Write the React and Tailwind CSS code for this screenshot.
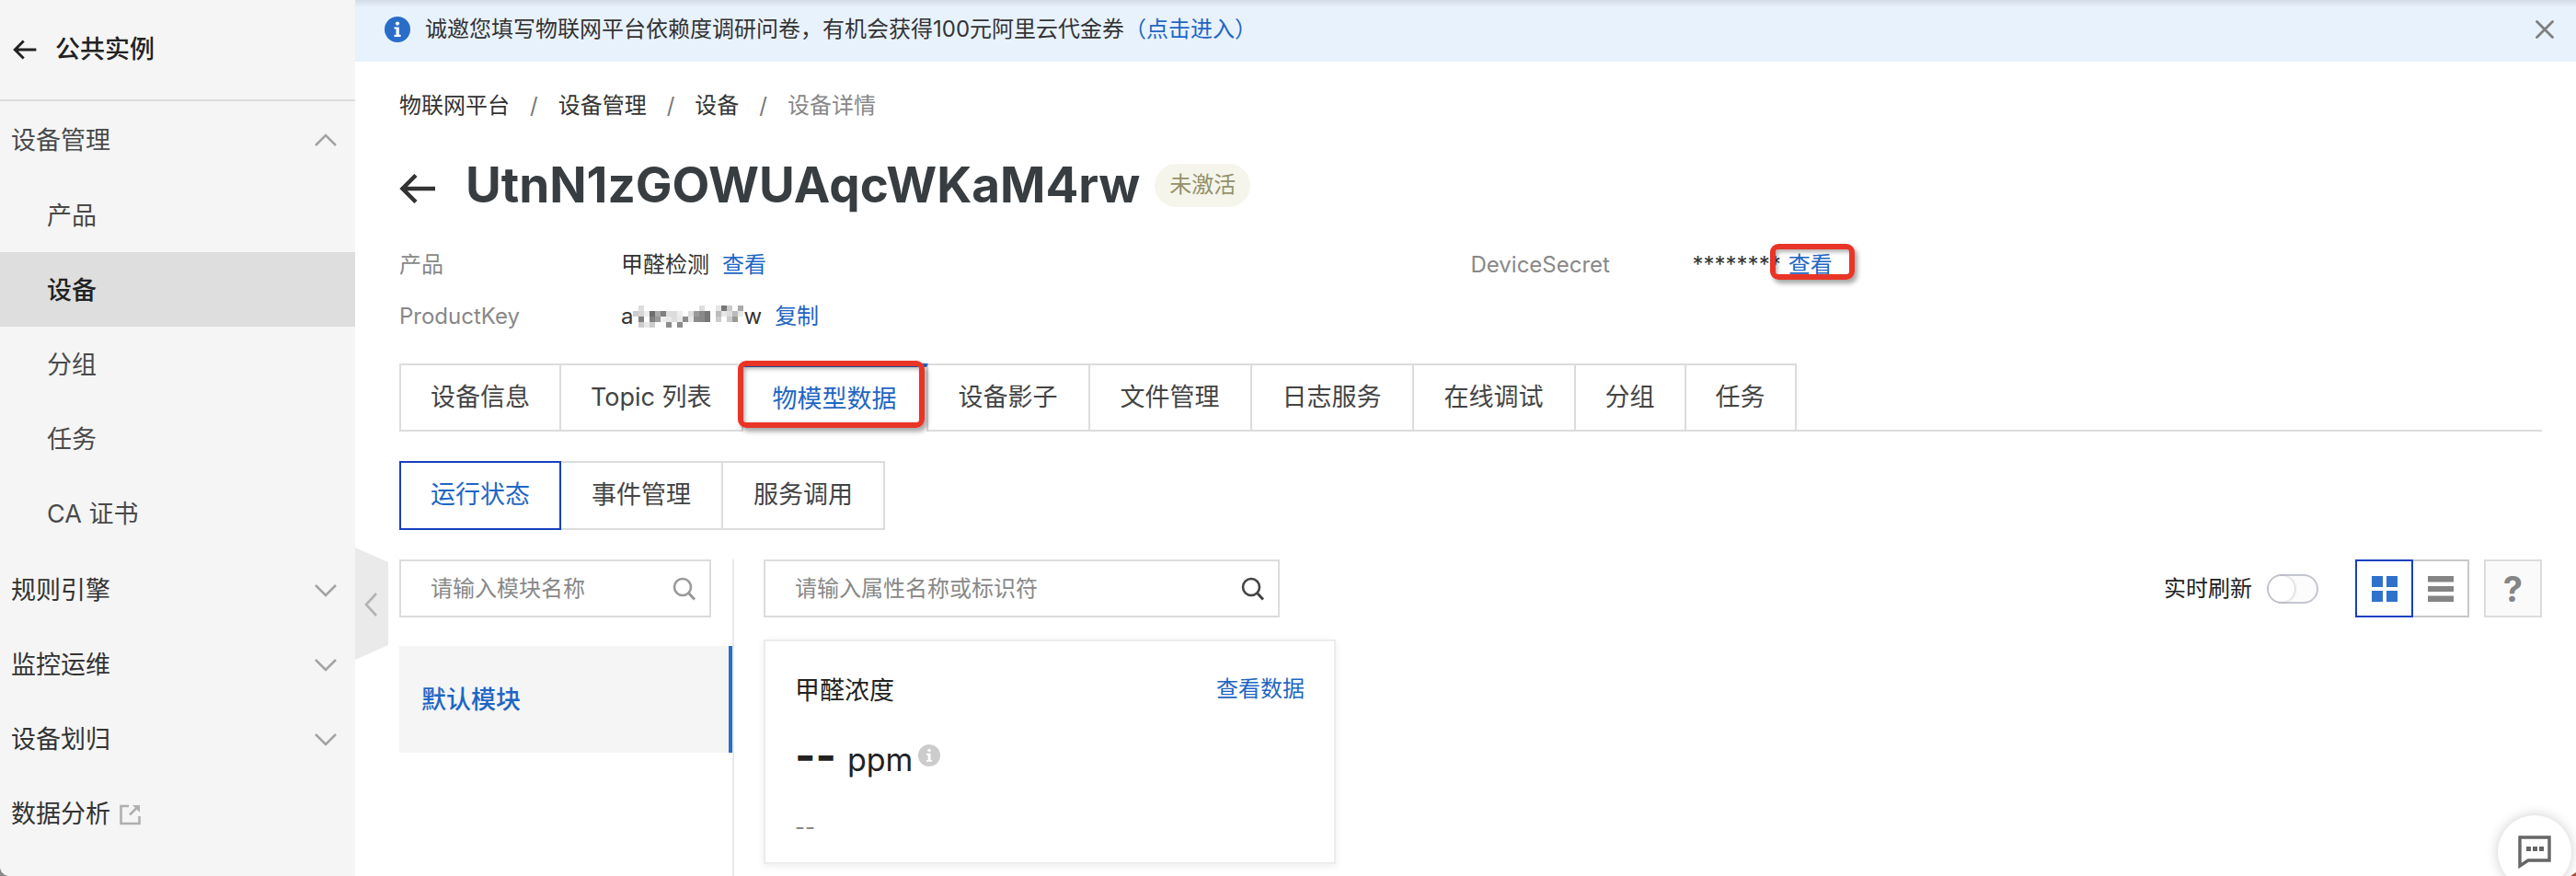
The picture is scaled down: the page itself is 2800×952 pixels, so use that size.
import { useState } from "react";

const fontStack = "font-['Inter','Noto_Sans_CJK_SC',sans-serif]";

function Chevron({ up }) {
  return (
    <svg width="24" height="14" viewBox="0 0 24 14" fill="none" stroke="#a3a3a3" strokeWidth="2.5" aria-hidden="true">
      <path d={up ? "M1 13L12 2L23 13" : "M1 1L12 12L23 1"} />
    </svg>
  );
}

function ArrowLeft({ className }) {
  return (
    <svg className={className} viewBox="0 0 40 32" fill="none" stroke="currentColor" strokeWidth="4.5" aria-hidden="true">
      <path d="M18 1.5L3.5 16L18 30.5M3.5 16H39" />
    </svg>
  );
}

function InfoIcon({ className }) {
  return (
    <svg className={className} viewBox="0 0 28 28" aria-hidden="true">
      <circle cx="14" cy="14" r="14" fill="currentColor" />
      <circle cx="14" cy="7.6" r="2.1" fill="#fff" />
      <path d="M10.5 11.5H15.8V19.8H17.6V22H10.5V19.8H12.5V13.6H10.5Z" fill="#fff" />
    </svg>
  );
}

function SearchIcon({ className }) {
  return (
    <svg className={className} viewBox="0 0 26 26" fill="none" stroke="currentColor" strokeWidth="2.6" aria-hidden="true">
      <circle cx="11" cy="11" r="9" />
      <path d="M17.5 17.5L24 24.5" strokeWidth="3" />
    </svg>
  );
}

const subItems = ["产品", "设备", "分组", "任务", "CA 证书"];
const groups = ["规则引擎", "监控运维", "设备划归"];

function Sidebar() {
  return (
    <aside className="relative w-[386px] shrink-0 bg-[#f5f5f5]">
      <div className="flex h-[110px] items-center gap-5 border-b-2 border-[#dcdcdc] pl-[14px] text-[27px] font-medium text-[#222]">
        <button type="button" aria-label="返回" className="flex">
          <ArrowLeft className="h-6 w-[26px]" />
        </button>
        公共实例
      </div>
      <nav className="text-[27px] text-[#4a4a4a]">
        <button type="button" className="flex h-[83px] w-full items-center justify-between pr-5 pl-3">
          <span className="pt-1">设备管理</span>
          <Chevron up />
        </button>
        <ul className="pb-[2px]">
          {subItems.map((item) => (
            <li key={item}>
              <a
                href="#"
                className={
                  item === "设备"
                    ? "flex h-[81px] items-center bg-[#dedede] pt-1 pl-[51px] font-medium text-[#222]"
                    : "flex h-[81px] items-center pt-1 pl-[51px]"
                }
              >
                {item}
              </a>
            </li>
          ))}
        </ul>
        {groups.map((item) => (
          <button key={item} type="button" className="flex h-[81px] w-full items-center justify-between pt-[2px] pr-5 pl-3 text-[#333]">
            <span className="pt-[2px]">{item}</span>
            <Chevron />
          </button>
        ))}
        <a href="#" className="flex h-[81px] items-center gap-[10px] pt-1 pl-3 text-[#333]">
          数据分析
          <svg width="23" height="23" viewBox="0 0 23 23" fill="none" stroke="#b0b0b0" strokeWidth="2.6" aria-hidden="true">
            <path d="M10 2H1.5V21H21.5V13M11 11.5L20 2.5" />
            <path d="M14 1H22V9Z" fill="#b0b0b0" stroke="none" />
          </svg>
        </a>
      </nav>
      <button type="button" aria-label="收起菜单" className="absolute top-[595px] left-full">
        <svg width="36" height="122" viewBox="0 0 36 122" fill="none" aria-hidden="true">
          <path d="M0 0L36 16V106L0 122Z" fill="#eaeaea" />
          <path d="M23 50L12 62L23 74" stroke="#b3b3b3" strokeWidth="2.6" />
        </svg>
      </button>
      <svg className="absolute bottom-0 left-0" width="9" height="9" viewBox="0 0 9 9" aria-hidden="true">
        <path d="M0 0C1 5 4 8 9 9H0Z" fill="#8a8a8a" />
      </svg>
    </aside>
  );
}

function Banner() {
  return (
    <div className="flex h-[67px] items-center bg-[#e8f2fd] bg-linear-to-b from-[#d3dce6] to-[#e8f2fd] to-[8px] pr-6 pb-1 pl-8 text-2xl text-[#333]">
      <InfoIcon className="mr-4 size-7 text-[#2a6dc9]" />
      <p>
        诚邀您填写物联网平台依赖度调研问卷，有机会获得100元阿里云代金券
        <a href="#" className="text-[#1f66c4]">（点击进入）</a>
      </p>
      <button type="button" aria-label="关闭" className="ml-auto">
        <svg width="20" height="20" viewBox="0 0 20 20" stroke="#7f7f7f" strokeWidth="2.8" strokeLinecap="round" aria-hidden="true">
          <path d="M1.5 1.5L18.5 18.5M18.5 1.5L1.5 18.5" />
        </svg>
      </button>
    </div>
  );
}

/* Column, row and grey of each 6px block that masks the key. */
const mosaicCells = [
  [0, 1, "#ccc"], [1, 0, "#ddd"], [1, 1, "#d5d5d5"], [1, 2, "#808080"], [1, 3, "#ccc"], [2, 1, "#eee"], [2, 3, "#e8e8e8"],
  [3, 1, "#6e6e6e"], [3, 2, "#808080"], [3, 3, "#ccc"], [4, 1, "#aaa"], [4, 2, "#999"], [5, 1, "#808080"], [5, 2, "#eee"],
  [6, 1, "#ddd"], [6, 2, "#e8e8e8"], [6, 3, "#8c8c8c"], [7, 1, "#ddd"], [7, 2, "#ddd"], [8, 1, "#eee"], [8, 2, "#e8e8e8"], [8, 3, "#8c8c8c"],
  [9, 2, "#8c8c8c"], [10, 1, "#ddd"], [10, 2, "#e8e8e8"], [11, 1, "#999"], [11, 2, "#8c8c8c"], [12, 0, "#ddd"], [12, 1, "#888"], [12, 2, "#888"],
  [13, 1, "#777"], [13, 2, "#777"], [15, 0, "#e5e5e5"], [15, 1, "#bbb"], [15, 2, "#ccc"], [16, 0, "#777"], [16, 1, "#e8e8e8"],
  [17, 0, "#ccc"], [17, 1, "#ddd"], [17, 2, "#ccc"], [18, 1, "#bbb"], [18, 2, "#999"], [19, 0, "#aaa"], [19, 1, "#e8e8e8"],
];

function Mosaic() {
  return (
    <svg width="120" height="24" viewBox="0 0 120 24" shapeRendering="crispEdges" aria-hidden="true">
      {mosaicCells.map(([x, y, c]) => (
        <rect key={x + "-" + y} x={x * 6} y={y * 6} width="6" height="6" fill={c} />
      ))}
    </svg>
  );
}

function Highlight({ className }) {
  return (
    <span
      aria-hidden="true"
      className={
        "pointer-events-none absolute rounded-[9px] border-[6px] border-[#e83527] shadow-[3px_4px_5px_rgba(0,0,0,0.35),inset_2px_3px_4px_rgba(0,0,0,0.3)] " +
        className
      }
    />
  );
}

const tabs = ["设备信息", "Topic 列表", "物模型数据", "设备影子", "文件管理", "日志服务", "在线调试", "分组", "任务"];
const subTabs = ["运行状态", "事件管理", "服务调用"];

function Header() {
  return (
    <>
      <nav aria-label="面包屑" className="mt-[30px] flex h-9 items-center gap-[22px] text-2xl text-[#333]">
        <a href="#">物联网平台</a>
        <span className="text-[#777]">/</span>
        <a href="#">设备管理</a>
        <span className="text-[#777]">/</span>
        <a href="#">设备</a>
        <span className="text-[#777]">/</span>
        <span className="text-[#888]">设备详情</span>
      </nav>
      <div className="mt-9 flex h-16 items-center">
        <button type="button" aria-label="返回" className="mt-2 text-[#333]">
          <ArrowLeft className="h-8 w-10" />
        </button>
        <h1 className="ml-8 pt-[2px] text-[53px] font-bold text-[#373d41]">UtnN1zGOWUAqcWKaM4rw</h1>
        <span className="ml-4 flex h-[47px] items-center rounded-full bg-[#f5f5ec] px-4 text-2xl text-[#94916a]">未激活</span>
      </div>
      <dl className="mt-[27px] grid grid-cols-2 text-2xl text-[#333]">
        <div className="flex h-14 items-center">
          <dt className="w-[241px] text-[#888]">产品</dt>
          <dd>
            甲醛检测<a href="#" className="ml-[14px] text-[#1f66c4]">查看</a>
          </dd>
        </div>
        <div className="flex h-14 items-center">
          <dt className="w-[241px] text-[#888]">DeviceSecret</dt>
          <dd className="flex">
            ********
            <a href="#" className="relative ml-2 text-[#1f66c4]">
              查看
              <Highlight className="-top-[7px] -right-6 bottom-0 -left-5" />
            </a>
          </dd>
        </div>
        <div className="flex h-14 items-center">
          <dt className="w-[241px] text-[#888]">ProductKey</dt>
          <dd className="flex items-center">
            a<Mosaic />w<a href="#" className="ml-[14px] text-[#1f66c4]">复制</a>
          </dd>
        </div>
      </dl>
    </>
  );
}

function Tabs() {
  return (
    <>
      <div role="tablist" className="mt-[23px] flex h-[74px] text-[27px] text-[#444]">
        {tabs.map((t, i) => {
          const active = t === "物模型数据";
          const border = active
            ? "relative border-t-4 border-r-2 border-t-[#1f66c4] border-r-[#dcdcdc] text-[#1f66c4]"
            : i === 0
              ? "border-2 border-[#dcdcdc]"
              : "border-y-2 border-r-2 border-[#dcdcdc]";
          const width = t.length > 2 ? "min-w-[176px]" : "";
          return (
            <button key={t} type="button" role="tab" aria-selected={active} className={"px-8 " + border + " " + width}>
              {t}
              {active && <Highlight className="-top-[7px] right-[2px] bottom-1 -left-[6px]" />}
            </button>
          );
        })}
        <span className="grow border-b-2 border-[#dcdcdc]" />
      </div>
      <div role="tablist" className="mt-8 flex h-[75px] text-[27px] text-[#444]">
        {subTabs.map((t, i) => (
          <button
            key={t}
            type="button"
            role="tab"
            aria-selected={i === 0}
            className={
              i === 0
                ? "min-w-[176px] border-2 border-[#1540c0] text-[#1f66c4]"
                : "min-w-[176px] border-y-2 border-r-2 border-[#dcdcdc]"
            }
          >
            {t}
          </button>
        ))}
      </div>
    </>
  );
}

function ModuleColumn() {
  return (
    <div className="w-[364px] shrink-0 border-r-2 border-[#e8e8e8]">
      <div className="flex h-[63px] w-[339px] items-center border-2 border-[#dcdcdc] pr-[14px] pl-8">
        <input aria-label="模块名称" placeholder="请输入模块名称" className="min-w-0 grow text-2xl outline-none placeholder:text-[#888]" />
        <SearchIcon className="size-[26px] shrink-0 text-[#999]" />
      </div>
      <button type="button" className="mt-[31px] flex h-[116px] w-full items-center border-r-4 border-[#2a6dc9] bg-[#f5f5f5] pt-[2px] pl-6 text-[27px] font-medium text-[#1f66c4]">
        默认模块
      </button>
    </div>
  );
}

function Properties() {
  const [on, setOn] = useState(false);
  return (
    <div className="grow pl-8">
      <div className="flex items-center">
        <div className="flex h-[63px] w-[561px] items-center border-2 border-[#dcdcdc] pr-[14px] pl-8">
          <input aria-label="属性名称或标识符" placeholder="请输入属性名称或标识符" className="min-w-0 grow text-2xl outline-none placeholder:text-[#888]" />
          <SearchIcon className="size-[26px] shrink-0 text-[#444]" />
        </div>
        <label htmlFor="live" className="ml-auto text-2xl text-[#222]">实时刷新</label>
        <button
          id="live"
          type="button"
          role="switch"
          aria-checked={on}
          onClick={() => setOn(!on)}
          className="ml-4 h-8 w-14 rounded-full border-2 border-[#c4c6cf] bg-[#fcfcfc]"
        >
          <span className="block size-7 rounded-full bg-white shadow-[1px_0_3px_rgba(0,0,0,0.2)]" />
        </button>
        <button type="button" aria-label="卡片视图" className="ml-10 flex size-[63px] items-center justify-center border-2 border-[#1540c0]">
          <svg width="28" height="28" viewBox="0 0 28 28" fill="#2f72cc" aria-hidden="true">
            <path d="M0 0H12V12H0ZM16 0H28V12H16ZM0 16H12V28H0ZM16 16H28V28H16Z" />
          </svg>
        </button>
        <button type="button" aria-label="列表视图" className="flex h-[63px] w-[61px] items-center justify-center border-y-2 border-r-2 border-[#c8c8c8]">
          <svg width="28" height="28" viewBox="0 0 28 28" fill="#858585" aria-hidden="true">
            <path d="M0 0H28V6.5H0ZM0 11H28V17H0ZM0 21.5H28V28H0Z" />
          </svg>
        </button>
        <button type="button" aria-label="帮助" className="ml-4 size-[63px] border-2 border-[#dcdcdc] bg-[#fafafa] text-[38px] leading-none font-bold text-[#858585]">
          ?
        </button>
      </div>
      <article className="mt-6 w-[622px] border-2 border-[#ececec] px-8 shadow-[0_2px_8px_rgba(0,0,0,0.08)]">
        <div className="flex h-[104px] items-center justify-between">
          <h2 className="pt-1 text-[27px] text-[#222]">甲醛浓度</h2>
          <a href="#" className="text-2xl text-[#1f66c4]">查看数据</a>
        </div>
        <p className="flex h-11 items-center text-[#222]">
          <span className="flex items-baseline gap-3 pb-1 leading-none">
            <span className="text-[48px] leading-none font-bold">--</span>
            <span className="text-[34px] leading-none">ppm</span>
          </span>
          <InfoIcon className="mb-1 ml-[6px] size-6 text-[#ccc]" />
        </p>
        <p className="mt-[38px] h-[54px] text-2xl text-[#888]">--</p>
      </article>
    </div>
  );
}

export default function App() {
  return (
    <div className={"relative flex min-h-screen overflow-hidden bg-white " + fontStack}>
      <Sidebar />
      <div className="flex min-w-0 grow flex-col">
        <Banner />
        <main className="flex grow flex-col pr-[37px] pl-12">
          <Header />
          <Tabs />
          <div className="mt-8 flex grow">
            <ModuleColumn />
            <Properties />
          </div>
        </main>
      </div>
      <button type="button" aria-label="反馈" className="absolute right-[5px] -bottom-[14px] flex size-20 items-center justify-center rounded-full bg-white shadow-[0_0_14px_rgba(0,0,0,0.2)]">
        <svg width="36" height="36" viewBox="0 0 36 36" aria-hidden="true">
          <path d="M2 2H34V27H11L2 33Z" fill="none" stroke="#666" strokeWidth="3.4" />
          <path d="M9 12H14V17H9ZM16 12H21V17H16ZM23 12H28V17H23Z" fill="#666" />
        </svg>
      </button>
      <svg className="absolute right-0 bottom-0" width="6" height="4" viewBox="0 0 6 4" aria-hidden="true">
        <path d="M0 4L6 0V4Z" fill="#b5482f" />
      </svg>
    </div>
  );
}
